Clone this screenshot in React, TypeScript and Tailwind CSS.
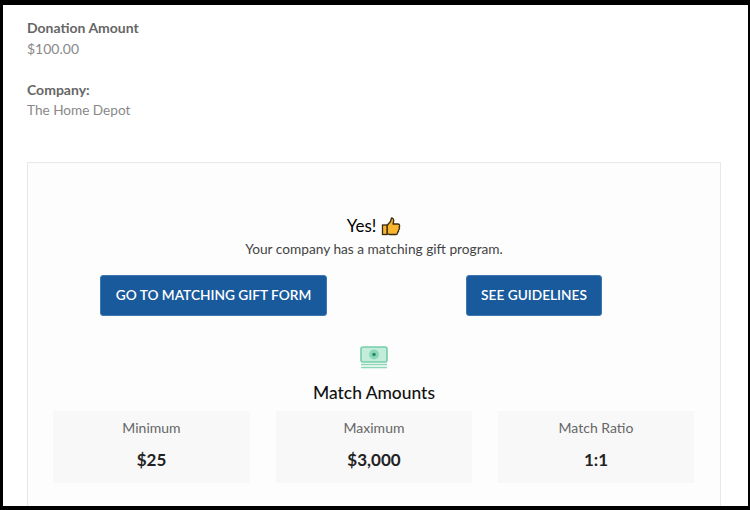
import React from 'react';

const font = { fontFamily: 'Lato, sans-serif' };

const Thumb = () => (
  <svg width="20" height="21" viewBox="0 0 20 20" className="inline-block">
    <path d="M6 9 L9.5 5 L10.5 1.5 C12.5 1.5 13 3.5 12.5 5.5 L12 7.5 L17 7.5 C19 7.5 19 10 18 10.5 C19 11.5 18.5 13 17.5 13.3 C18 14.5 17.3 15.5 16.5 15.8 C16.8 17 16 18 15 18 L9 18 C7.5 18 7 17.5 6 17 Z" fill="#f9b52e" stroke="#3a2c10" strokeWidth="1.3" strokeLinejoin="round" />
    <rect x="1.5" y="8.5" width="4.5" height="9.5" fill="#f9b52e" stroke="#3a2c10" strokeWidth="1.3" />
  </svg>
);

const Money = () => (
  <svg width="28" height="23" viewBox="0 0 28 23">
    <rect x="1" y="1" width="26" height="15" rx="2" fill="#c4ecda" stroke="#74cdab" strokeWidth="1.6" />
    <circle cx="14" cy="8.5" r="5" fill="#8ad8b9" />
    <circle cx="14" cy="8.5" r="1.8" fill="#2b8a68" />
    <path d="M1 18.5 H27 M1 21.5 H27" stroke="#8ad8b9" strokeWidth="1.3" />
  </svg>
);

const Stat = ({ label, value }: { label: string; value: string }) => (
  <div className="bg-[#f8f8f8] h-[72px] flex flex-col items-center pt-[7px]">
    <span className="text-[14px] leading-[20px] text-[#666]">{label}</span>
    <span className="text-[17px] leading-[24px] font-bold text-[#222] mt-[10px]">{value}</span>
  </div>
);

export default function App() {
  return (
    <div className="w-[750px] h-[510px] bg-white border-t-[5px] border-l-[3px] border-r-[2px] border-b-[4px] border-black overflow-hidden box-border" style={font}>
      <div className="pl-[24px] pr-[27px] pt-[12px]">
        <div className="text-[14px] leading-[22px] font-bold text-[#666]">Donation Amount</div>
        <div className="text-[14px] leading-[20px] text-[#888]">$100.00</div>
        <div className="text-[14px] leading-[22px] font-bold text-[#666] mt-[20px]">Company:</div>
        <div className="text-[13.6px] leading-[20px] text-[#888] mt-[-1px]">The Home Depot</div>

        {/* Match card */}
        <div className="mt-[42px] h-[360px] border border-[#e8e8e8] bg-[#fdfdfd] pl-[25px] pr-[25px] pt-[51px]">
          <div className="flex items-center justify-center gap-[5px] text-[17px] leading-[24px] text-black">
            Yes! <Thumb />
          </div>
          <div className="text-center text-[13.7px] leading-[20px] text-[#444] mt-[1px]">Your company has a matching gift program.</div>
          <div className="flex mt-[16px]">
            <button className="ml-[47px] w-[227px] h-[41px] bg-[#195a9c] border border-[#3f78b0] rounded-[3px] text-white text-[13.7px] font-semibold">GO TO MATCHING GIFT FORM</button>
            <button className="ml-[139px] w-[136px] h-[41px] bg-[#195a9c] border border-[#3f78b0] rounded-[3px] text-white text-[13.7px] font-semibold">SEE GUIDELINES</button>
          </div>
          <div className="flex justify-center mt-[30px]"><Money /></div>
          <div className="text-center text-[17.4px] leading-[24px] font-medium text-[#111] mt-[12px]">Match Amounts</div>
          <div className="grid grid-cols-[197px_196px_196px] gap-[26px] mt-[6px]">
            <Stat label="Minimum" value="$25" />
            <Stat label="Maximum" value="$3,000" />
            <Stat label="Match Ratio" value="1:1" />
          </div>
        </div>
      </div>
    </div>
  );
}
